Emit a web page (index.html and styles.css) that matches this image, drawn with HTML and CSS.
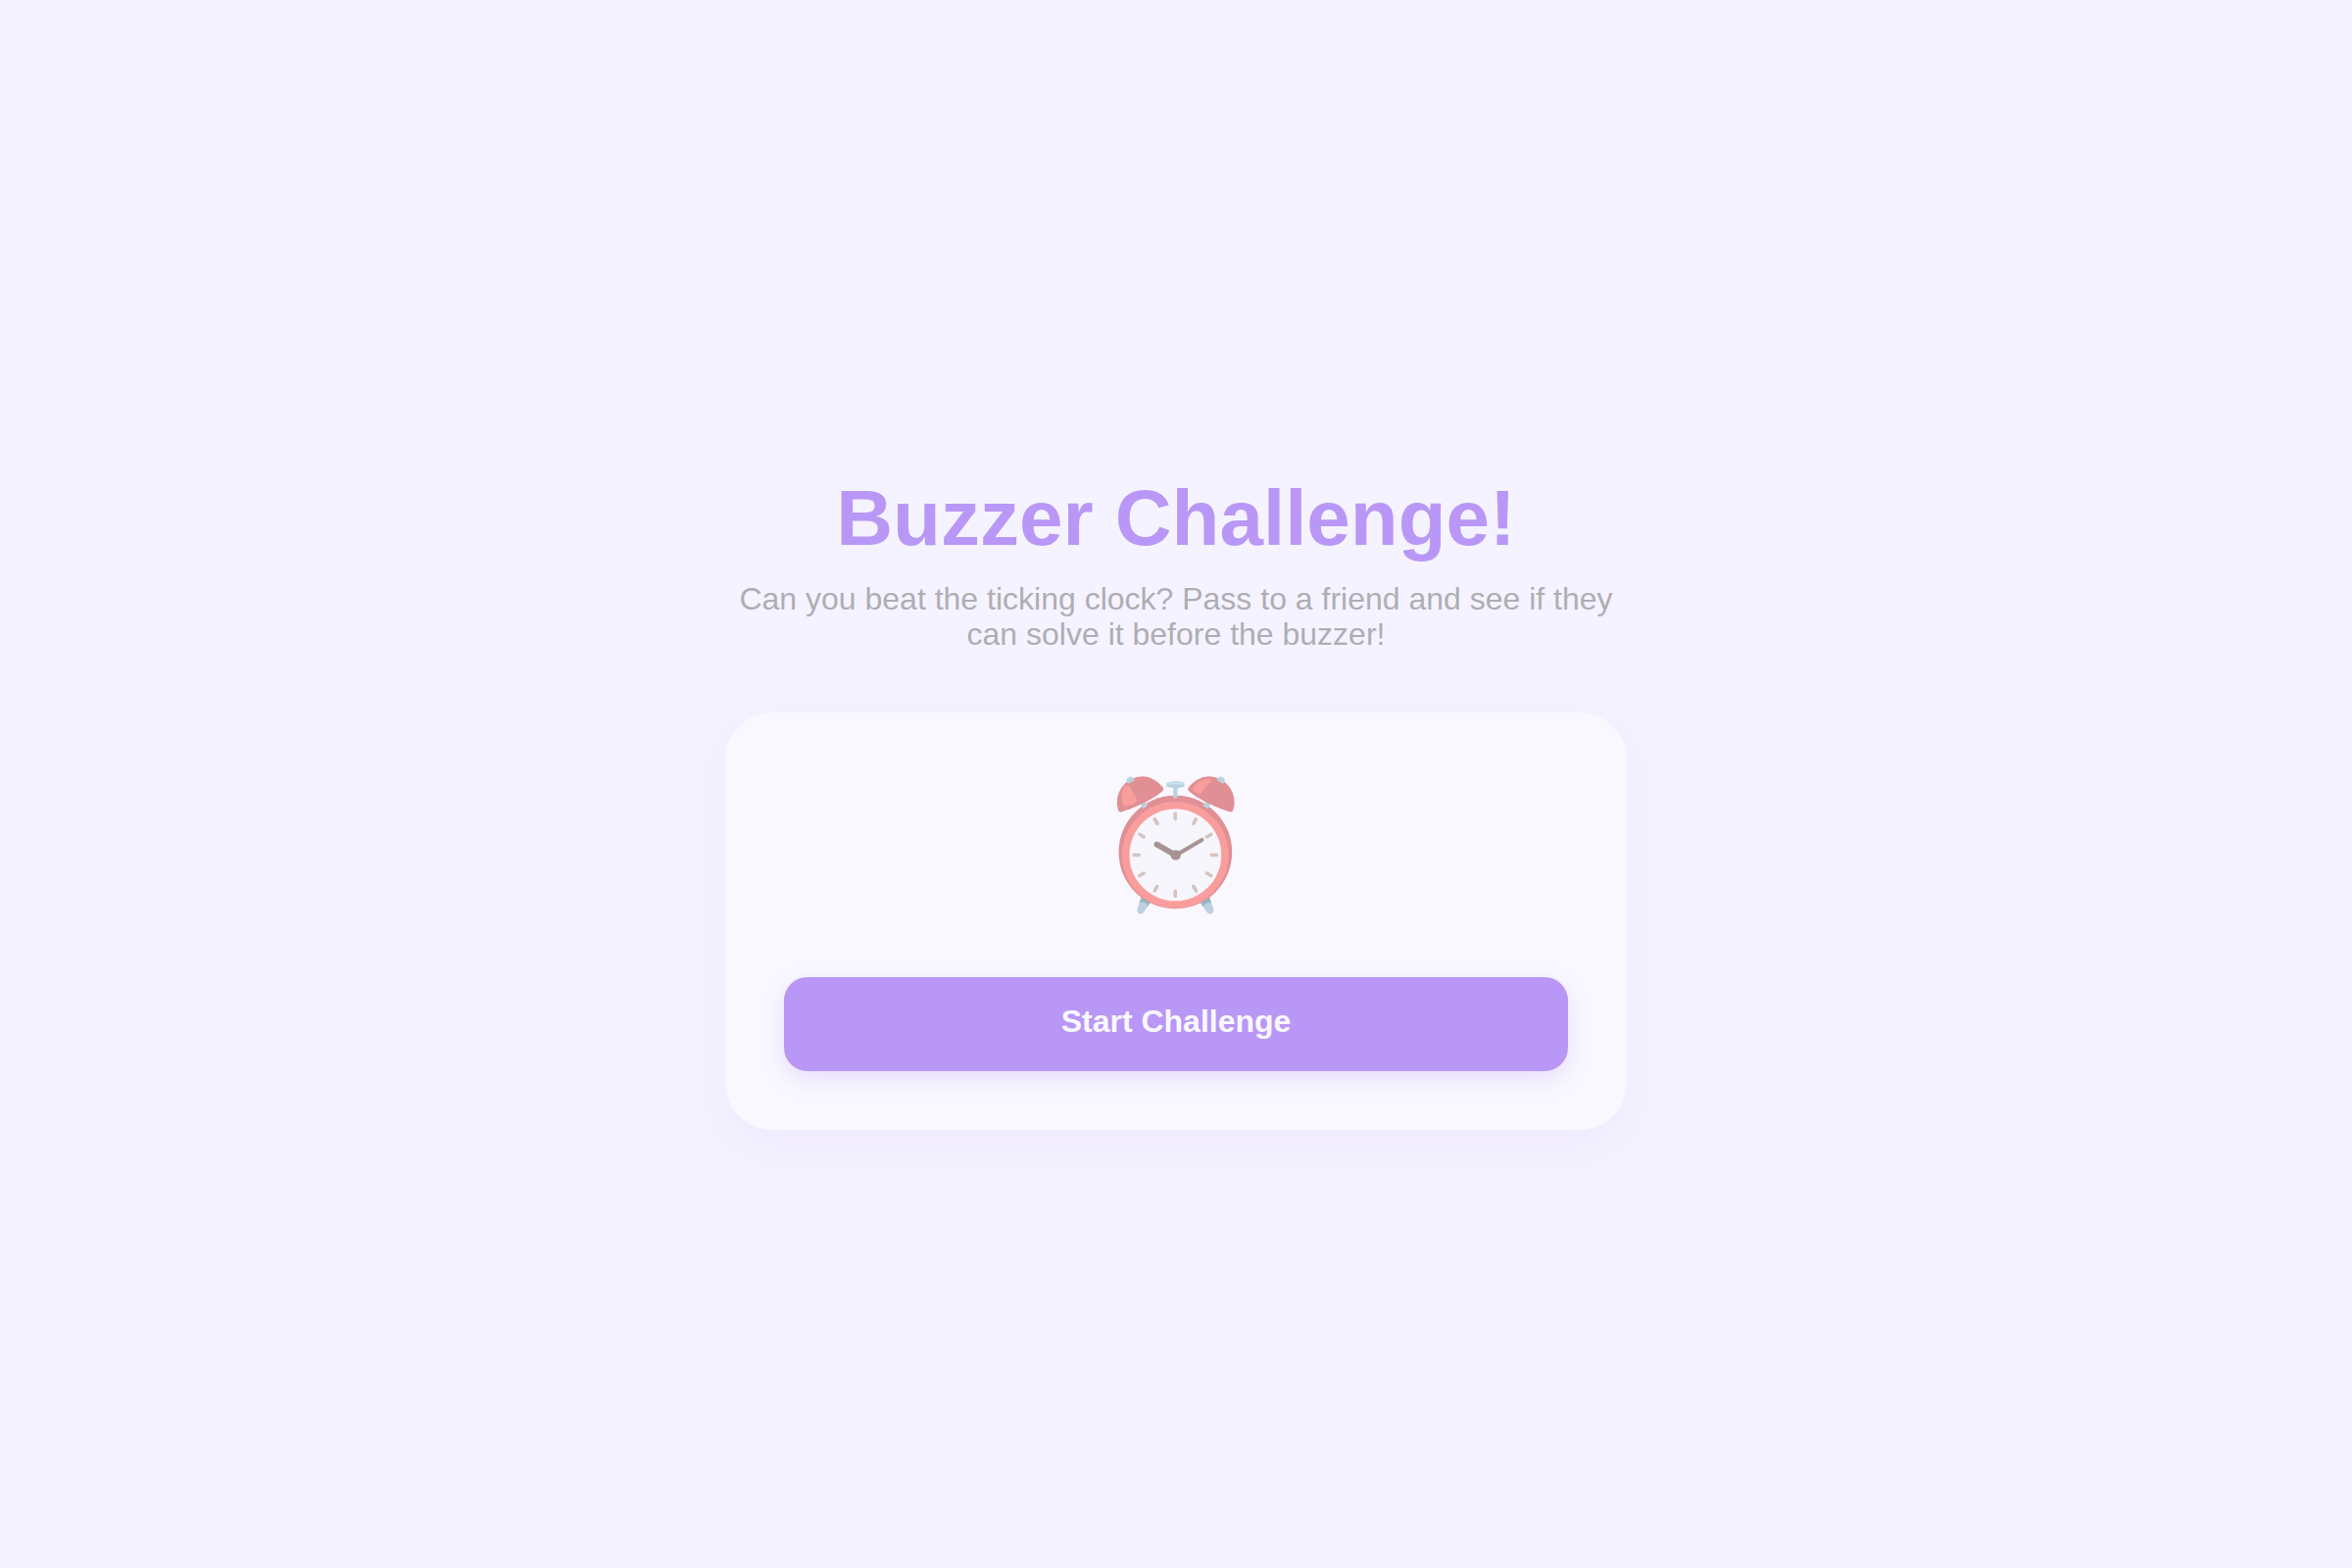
FILE: index.html
```html
<!DOCTYPE html>
<html lang="en">
<head>
<meta charset="utf-8">
<meta name="viewport" content="width=device-width, initial-scale=1">
<title>Buzzer Challenge!</title>
<link rel="stylesheet" href="styles.css">
</head>
<body>
<main class="intro">
  <h1 class="title">Buzzer Challenge!</h1>
  <p class="subtitle">Can you beat the ticking clock? Pass to a friend and see if they can solve it before the buzzer!</p>
  <section class="card">
    <div class="clock" role="img" aria-label="Alarm clock">⏰</div>
    <button class="start" type="button">Start Challenge</button>
  </section>
</main>
</body>
</html>
```
FILE: styles.css
```css
* {
  box-sizing: border-box;
}

body {
  margin: 0;
  min-height: 100vh;
  display: flex;
  align-items: center;
  justify-content: center;
  padding: 76px 40px 40px;
  background: #f5f3ff;
  font-family: "Liberation Sans", Arial, sans-serif;
  text-align: center;
}

.intro {
  width: 100%;
  max-width: 920px;
  opacity: 0.49;
}

.title {
  margin: 0 0 18px;
  font-size: 80px;
  line-height: 92px;
  color: #7c3aed;
}

.subtitle {
  margin: 0 0 62px;
  font-size: 32px;
  line-height: 36px;
  color: #666;
}

.card {
  display: flex;
  flex-direction: column;
  gap: 60px;
  padding: 60px;
  border-radius: 48px;
  background: #fff;
  box-shadow: 0 16px 40px rgba(124, 58, 237, 0.1);
}

.clock {
  font-family: "Noto Color Emoji", "Liberation Sans", sans-serif;
  font-size: 128px;
  line-height: 150px;
}

.start {
  width: 100%;
  height: 96px;
  padding: 0 40px 6px;
  border: 0;
  border-radius: 24px;
  background: #7c3aed;
  box-shadow: 0 8px 24px rgba(124, 58, 237, 0.3);
  color: #fff;
  font: bold 32px/36px "Liberation Sans", Arial, sans-serif;
  cursor: pointer;
}
```
